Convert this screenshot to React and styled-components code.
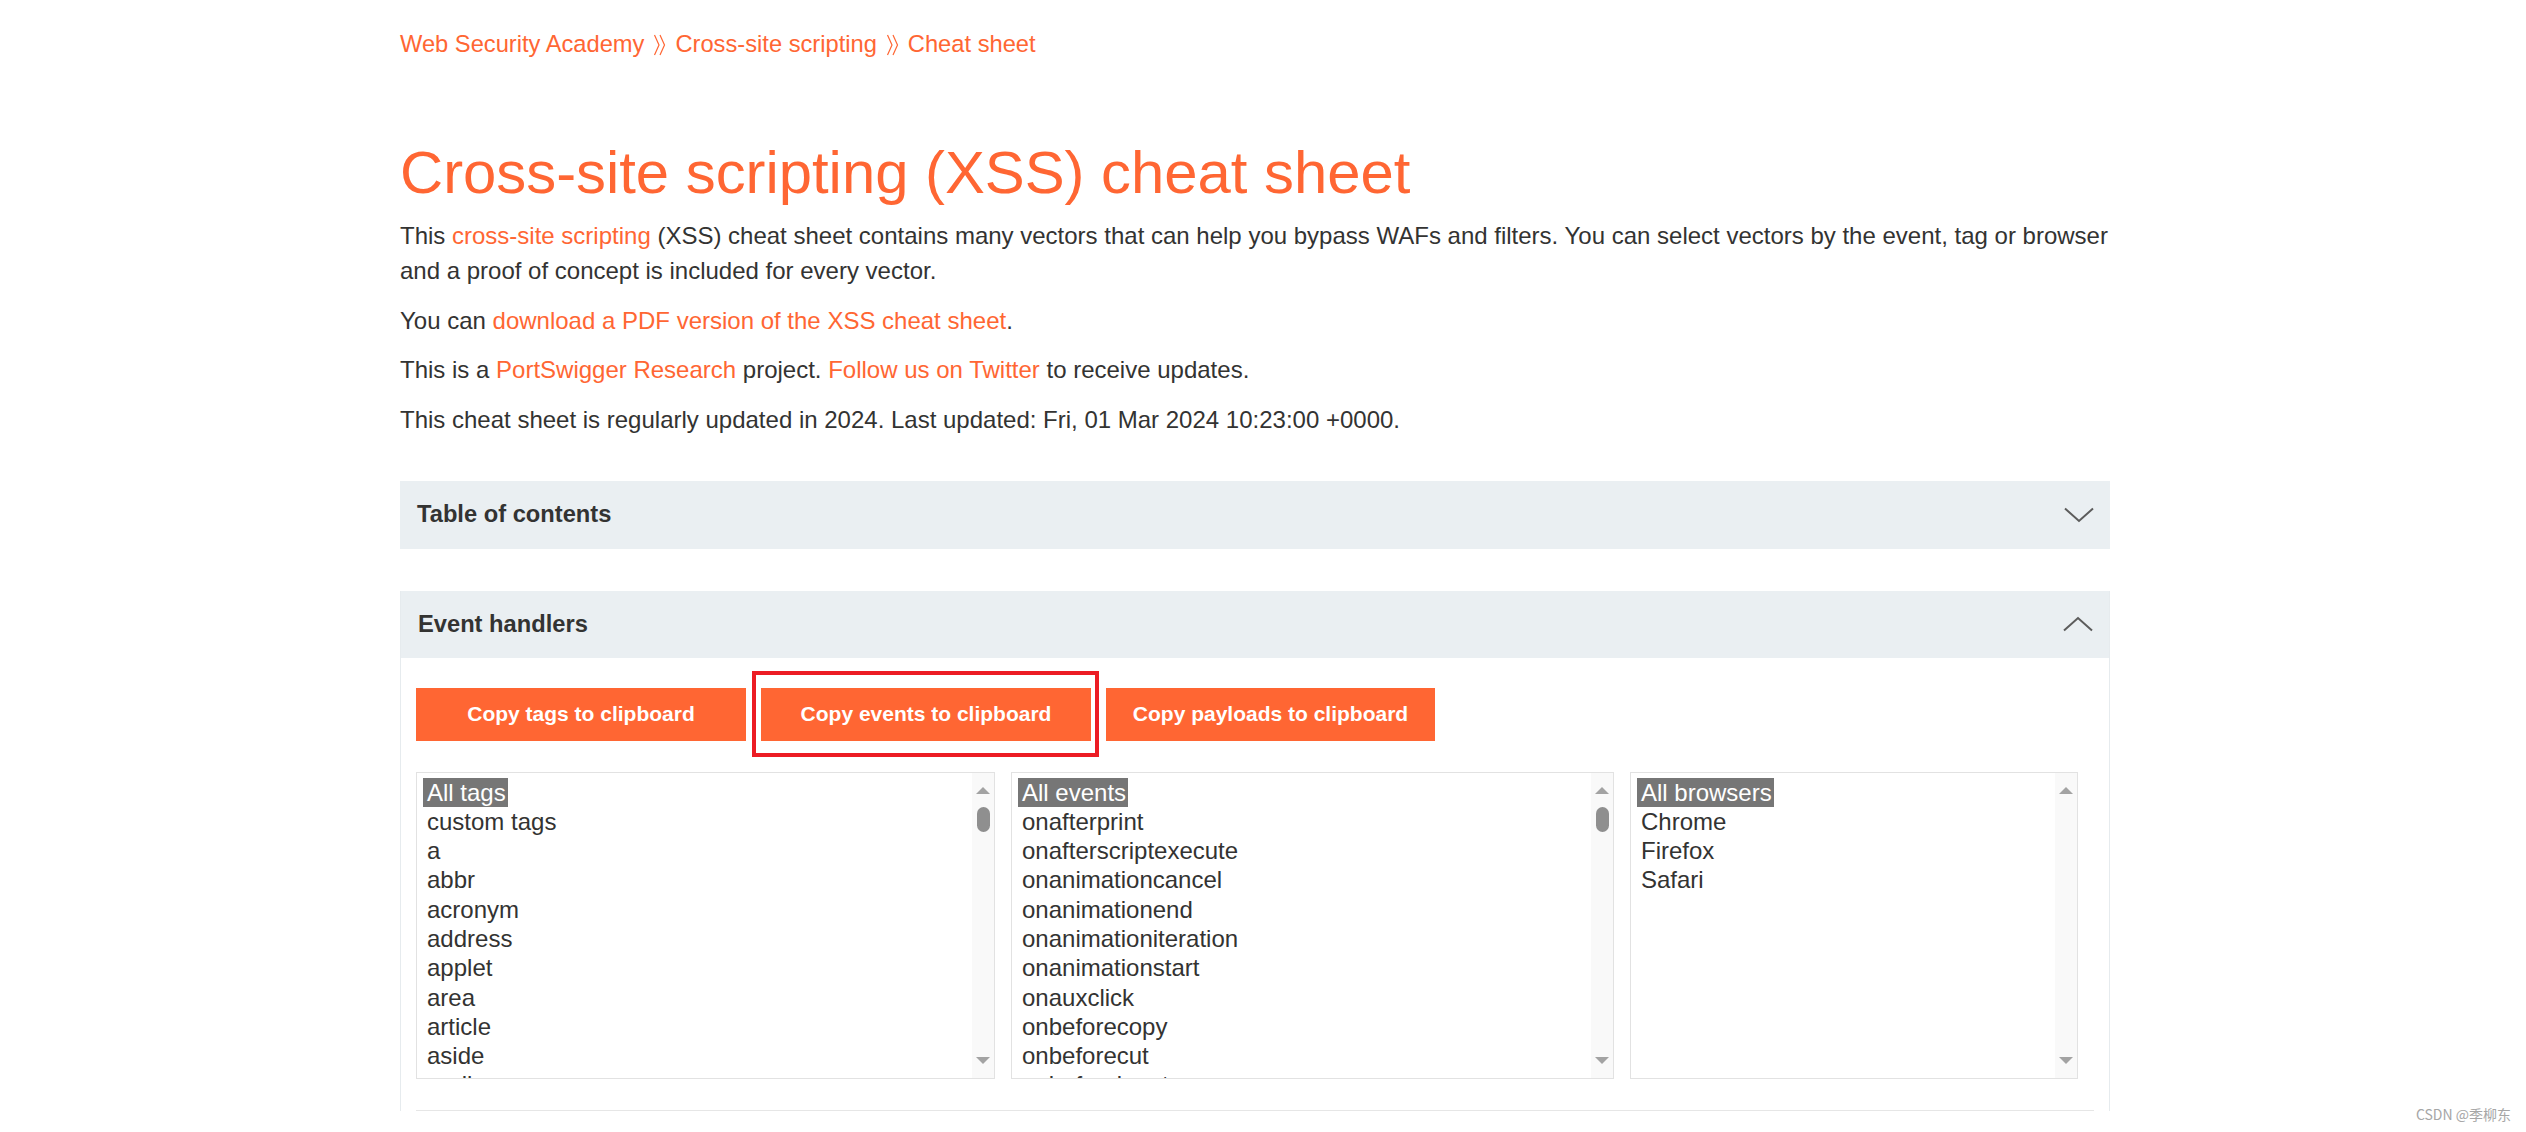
import React from "react";
import styled, { createGlobalStyle } from "styled-components";

const orange = "#ff6633";
const text = "#333332";

const GlobalStyle = createGlobalStyle`
  body {
    margin: 0;
    background: #ffffff;
    color: ${text};
    font-family: "Liberation Sans", Arial, sans-serif;
  }
`;

const Page = styled.div`
  display: flex;
  flex-direction: column;
  width: 1710px;
  padding: 27px 0 0 400px;
`;

const Breadcrumb = styled.nav`
  display: flex;
  align-items: center;
  height: 35px;
  font-size: 23.7px;
  color: ${orange};
`;

const Crumb = styled.a`
  color: ${orange};
  text-decoration: none;
`;

const Sep = styled.svg`
  width: 13px;
  height: 22px;
  margin: 0 9px;
`;

const Title = styled.h1`
  margin: 78px 0 0;
  font-size: 59.8px;
  line-height: 66px;
  font-weight: normal;
  color: ${orange};
`;

const Intro = styled.div`
  display: flex;
  flex-direction: column;
  gap: 14.5px;
  width: 1740px;
  margin-top: 12px;
`;

const P = styled.p`
  margin: 0;
  font-size: 24px;
  line-height: 35px;
`;

const Link = styled.a`
  color: ${orange};
  text-decoration: none;
`;

const Bar = styled.div`
  display: flex;
  align-items: center;
  justify-content: space-between;
  height: ${({ $h }) => $h}px;
  margin-top: ${({ $mt }) => $mt || 0}px;
  padding: 0 16px 0 17px;
  background: #eaeff2;
  font-size: 23.7px;
  font-weight: bold;
`;

const Panel = styled.section`
  display: flex;
  flex-direction: column;
  margin-top: 42px;
  border-left: 1px solid #e6ebee;
  border-right: 1px solid #e6ebee;
`;

const PanelBody = styled.div`
  display: flex;
  flex-direction: column;
  padding: 30px 15px 0;
`;

const ButtonRow = styled.div`
  display: flex;
  gap: 15px;
`;

const CopyButton = styled.button`
  position: relative;
  width: ${({ $w }) => $w}px;
  height: 53px;
  border: 0;
  padding: 0;
  background: ${orange};
  color: #ffffff;
  font-family: "Liberation Sans", Arial, sans-serif;
  font-size: 21px;
  font-weight: bold;

  ${({ $marked }) =>
    $marked &&
    `
    &::after {
      content: "";
      position: absolute;
      top: -17px;
      left: -9px;
      right: -8px;
      bottom: -16px;
      border: 4px solid #ec1c24;
    }
  `}
`;

const ListRow = styled.div`
  display: flex;
  gap: 16px;
  margin-top: 31px;
`;

const ListBox = styled.div`
  display: flex;
  width: ${({ $w }) => $w}px;
  height: 307px;
  box-sizing: border-box;
  border: 1px solid #e2e2e2;
  overflow: hidden;
`;

const Options = styled.div`
  flex: 1;
  padding: 5px 0 0 10px;
`;

const Option = styled.div`
  font-size: 24px;
  line-height: 29.3px;
  height: 29.3px;
  white-space: nowrap;
  color: ${text};
`;

const Selected = styled.span`
  display: inline-block;
  margin-left: -4px;
  padding: 0 2px 0 4px;
  background: #767676;
  color: #ffffff;
`;

const Track = styled.div`
  display: flex;
  flex-direction: column;
  align-items: center;
  width: 22px;
  padding: 14px 0;
  background: #f9f9f9;
`;

const Arrow = styled.div`
  width: 0;
  height: 0;
  border-left: 7px solid transparent;
  border-right: 7px solid transparent;
  ${({ $down }) =>
    $down
      ? "border-top: 7px solid #a3a3a3; margin-top: auto;"
      : "border-bottom: 7px solid #a3a3a3;"}
`;

const Thumb = styled.div`
  width: 13px;
  height: 25px;
  margin-top: 13px;
  border-radius: 7px;
  background: #8f8f8f;
`;

const Divider = styled.hr`
  margin: 31px 0 0;
  border: 0;
  height: 1px;
  background: #e6e6e6;
`;

const Watermark = styled.div`
  position: absolute;
  right: 15px;
  bottom: 8px;
  font-family: "Noto Sans CJK SC", sans-serif;
  font-size: 14px;
  color: #a6a6a6;
`;

const Chevron = ({ up }) => (
  <svg width="30" height="16" viewBox="0 0 30 16">
    <polyline
      points={up ? "1,14.5 15,2 29,14.5" : "1,1.5 15,14 29,1.5"}
      fill="none"
      stroke="#5c5c5c"
      strokeWidth="2"
    />
  </svg>
);

const Separator = () => (
  <Sep viewBox="0 0 13 22">
    <path
      d="M1.5 1 L6 11 L1.5 21 M7 1 L11.5 11 L7 21"
      fill="none"
      stroke={orange}
      strokeWidth="1.2"
    />
  </Sep>
);

const lists = [
  {
    width: 579,
    thumb: true,
    items: ["All tags", "custom tags", "a", "abbr", "acronym", "address", "applet", "area", "article", "aside", "audio"],
  },
  {
    width: 603,
    thumb: true,
    items: [
      "All events",
      "onafterprint",
      "onafterscriptexecute",
      "onanimationcancel",
      "onanimationend",
      "onanimationiteration",
      "onanimationstart",
      "onauxclick",
      "onbeforecopy",
      "onbeforecut",
      "onbeforeinput",
    ],
  },
  { width: 448, thumb: false, items: ["All browsers", "Chrome", "Firefox", "Safari"] },
];

const buttons = [
  { label: "Copy tags to clipboard", width: 330 },
  { label: "Copy events to clipboard", width: 330, marked: true },
  { label: "Copy payloads to clipboard", width: 329 },
];

export default function App() {
  return (
    <>
      <GlobalStyle />
      <Page>
        <Breadcrumb>
          <Crumb href="#">Web Security Academy</Crumb>
          <Separator />
          <Crumb href="#">Cross-site scripting</Crumb>
          <Separator />
          <Crumb href="#">Cheat sheet</Crumb>
        </Breadcrumb>

        <Title>Cross-site scripting (XSS) cheat sheet</Title>

        <Intro>
          <P>
            This <Link href="#">cross-site scripting</Link> (XSS) cheat sheet contains many vectors that can
            help you bypass WAFs and filters. You can select vectors by the event, tag or browser and a proof of
            concept is included for every vector.
          </P>
          <P>
            You can <Link href="#">download a PDF version of the XSS cheat sheet</Link>.
          </P>
          <P>
            This is a <Link href="#">PortSwigger Research</Link> project. <Link href="#">Follow us on Twitter</Link>{" "}
            to receive updates.
          </P>
          <P>This cheat sheet is regularly updated in 2024. Last updated: Fri, 01 Mar 2024 10:23:00 +0000.</P>
        </Intro>

        <Bar $h={68} $mt={44}>
          <span>Table of contents</span>
          <Chevron />
        </Bar>

        <Panel>
          <Bar $h={67}>
            <span>Event handlers</span>
            <Chevron up />
          </Bar>
          <PanelBody>
            <ButtonRow>
              {buttons.map((b) => (
                <CopyButton key={b.label} $w={b.width} $marked={b.marked}>
                  {b.label}
                </CopyButton>
              ))}
            </ButtonRow>
            <ListRow>
              {lists.map((l) => (
                <ListBox key={l.items[0]} $w={l.width}>
                  <Options>
                    {l.items.map((item, i) => (
                      <Option key={item}>{i === 0 ? <Selected>{item}</Selected> : item}</Option>
                    ))}
                  </Options>
                  <Track>
                    <Arrow />
                    {l.thumb && <Thumb />}
                    <Arrow $down />
                  </Track>
                </ListBox>
              ))}
            </ListRow>
            <Divider />
          </PanelBody>
        </Panel>
      </Page>
      <Watermark>CSDN @季柳东</Watermark>
    </>
  );
}
